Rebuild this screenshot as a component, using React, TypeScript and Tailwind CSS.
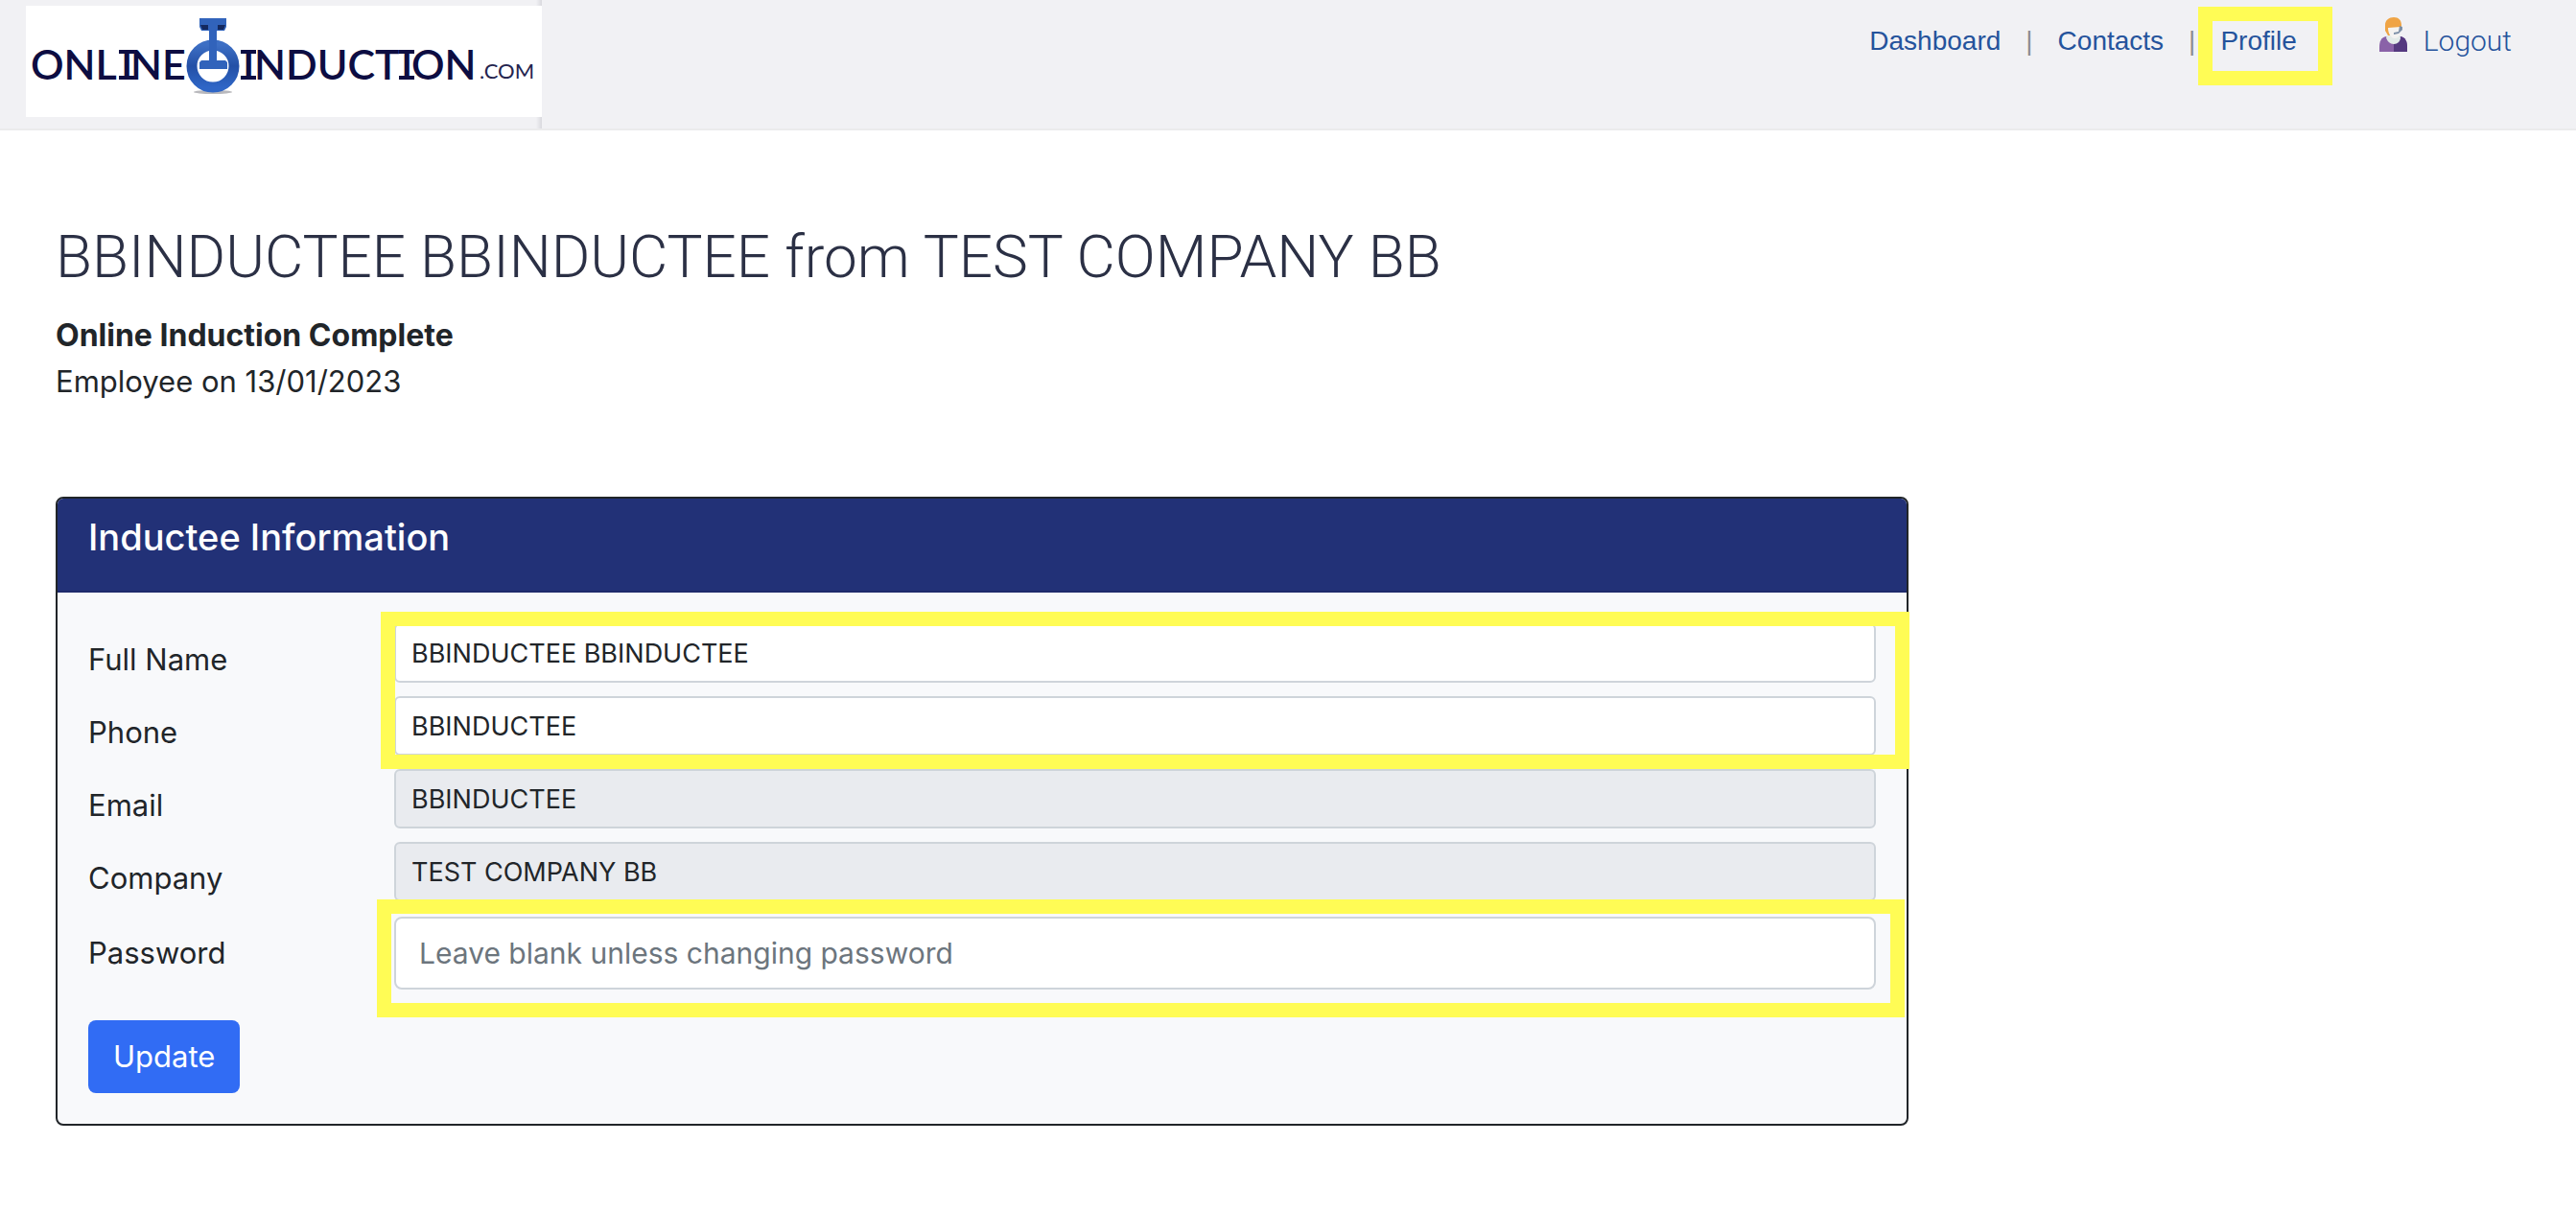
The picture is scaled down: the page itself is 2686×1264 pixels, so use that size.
import { ReactNode } from "react";

const navLinks = ["Dashboard", "Contacts"];

const Highlight = ({ className }: { className: string }) => (
  <div
    aria-hidden="true"
    className={`pointer-events-none absolute border-[15px] border-[#fffc55] ${className}`}
  />
);

const Logo = () => (
  <svg viewBox="0 0 538 116" className="block h-[116px] w-[538px] bg-white" role="img" aria-label="Online Induction">
    <defs>
      <linearGradient id="ring" x1="0" y1="0" x2="0" y2="1">
        <stop offset="0" stopColor="#3d6fc4" />
        <stop offset="0.5" stopColor="#2450a6" />
        <stop offset="1" stopColor="#2f66c6" />
      </linearGradient>
    </defs>
    <g fill="#0d0d42" fontFamily="Lato, sans-serif" fontSize="43" fontWeight="600">
      <text x="5" y="77">ONL</text>
      <text x="99" y="77">I</text>
      <text x="109" y="77">NE</text>
      <text x="226" y="77">I</text>
      <text x="238" y="77">NDUCT</text>
      <text x="391" y="77">I</text>
      <text x="402" y="77">ON</text>
      <text x="473" y="76" fontSize="22" fontWeight="400" fill="#24244f">.COM</text>
    </g>
    {/* serifs of the three I's */}
    <path d="M97 46h16v4H97zM97 73h16v4H97zM224 46h16v4h-16zM224 73h16v4h-16zM389 46h16v4h-16zM389 73h16v4h-16z" fill="#0d0d42" />
    <ellipse cx="195" cy="90" rx="20" ry="2" fill="#b9b9bd" />
    <circle cx="195" cy="63" r="22" fill="none" stroke="url(#ring)" strokeWidth="11" />
    <path d="M181 13h28v9l-2 4h-8v31h9l2 2v7h-29v-7l2-2h8V26h-8l-2-4z" fill="#3163bb" />
    <path d="M182 20h8v5h-6zM200 20h8l-2 5h-6z" fill="#14295f" />
  </svg>
);

const UserIcon = () => (
  <svg viewBox="0 0 29 36" className="h-9 w-[29px]" aria-hidden="true">
    <path d="M0 36v-5c0-6 2-10 7-11h15c5 1 7 5 7 11v5z" fill="#8a62a8" />
    <path d="M15 36V27l7-7c5 1 7 5 7 11v5z" fill="#55397f" />
    <path d="M8 19h13l1 2c0 4-3 7-7 7s-7-3-8-7z" fill="#e3ebe9" />
    <path d="M6 8c0-5 4-8 9-8s8 3 8 8v4H10l2 7h-3l-3-5z" fill="#efa445" />
    <path d="M9 11l13-1c1 6-1 12-6 12-4 0-7-5-7-11z" fill="#f4f3f1" />
    <path d="M21 9l3 1v3l-4 4-5 1v-2l5-1z" fill="#7d90a8" />
  </svg>
);

const Header = () => (
  <header className="flex justify-between border-b-2 border-[#ebebec] bg-[#f1f1f4] pl-[27px] pr-[67px]">
    <a href="#" className="block bg-[linear-gradient(to_left,#d9d9de,#f1f1f4_6px)] pt-[6px] pb-3">
      <Logo />
    </a>
    <nav className="flex items-start pt-[22px] font-['Liberation_Sans',sans-serif] text-[28px] leading-[42px] text-[#25539c]">
      <div className="flex gap-[26px]">
        {navLinks.map((link) => (
          <div key={link} className="flex gap-[26px]">
            <a href="#">{link}</a>
            <span className="text-[#8c8c91]">|</span>
          </div>
        ))}
        <div className="relative">
          <a href="#">Profile</a>
          <Highlight className="-top-[15px] -left-[23px] h-[82px] w-[140px]" />
        </div>
      </div>
      <a href="#" className="ml-[86px] flex gap-[17px] font-[Roboto,sans-serif] text-[30px] font-light">
        <span className="-mt-1">
          <UserIcon />
        </span>
        <span>Logout</span>
      </a>
    </nav>
  </header>
);

type FieldProps = {
  id: string;
  label: string;
  value: string;
  disabled?: boolean;
};

const Field = ({ id, label, value, disabled }: FieldProps) => (
  <div className="grid h-[62px] grid-cols-[319px_1fr] items-start">
    <label htmlFor={id} className="pt-[14px] leading-[48px]">
      {label}
    </label>
    <input
      id={id}
      type="text"
      defaultValue={value}
      disabled={disabled}
      className="h-[62px] w-full rounded-md border-2 border-[#ced4da] bg-white px-4 text-[27px] disabled:bg-[#e9ebef]"
    />
  </div>
);

const FieldGroup = ({ children }: { children: ReactNode }) => (
  <div className="relative flex flex-col gap-[14px]">{children}</div>
);

const App = () => {
  return (
    <div className="min-h-screen bg-white font-[Inter,sans-serif] text-[31px] leading-[48px] text-[#212529]">
      <Header />
      <main className="pt-[94px] pl-[58px] pr-[52px]">
        <h1 className="mb-5 font-[Roboto,sans-serif] text-[62px] leading-[76px] font-light text-[#2b3045]">
          BBINDUCTEE BBINDUCTEE from TEST COMPANY BB
        </h1>
        <p className="text-[32px] font-bold">Online Induction Complete</p>
        <p>Employee on 13/01/2023</p>

        <section className="mt-24 w-3/4 rounded-lg border-2 border-[#212529] bg-[#f8f9fb]">
          <div className="rounded-t-md border-b-2 border-[#1e2a6b] bg-[#223177] px-8 pt-4 pb-8">
            <h2 className="text-[38px] font-medium text-white">Inductee Information</h2>
          </div>
          <form className="p-8" onSubmit={(e) => e.preventDefault()}>
            <div className="flex flex-col gap-[14px]">
              <FieldGroup>
                <Field id="name" label="Full Name" value="BBINDUCTEE BBINDUCTEE" />
                <Field id="phone" label="Phone" value="BBINDUCTEE" />
                <Highlight className="-top-3 -right-[35px] -bottom-[14px] left-[305px]" />
              </FieldGroup>
              <FieldGroup>
                <Field id="email" label="Email" value="BBINDUCTEE" disabled />
                <Field id="company" label="Company" value="TEST COMPANY BB" disabled />
              </FieldGroup>
            </div>
            <div className="relative mt-4 grid grid-cols-[319px_1fr] items-center">
              <label htmlFor="password">Password</label>
              <input
                id="password"
                type="password"
                placeholder="Leave blank unless changing password"
                className="h-[76px] w-full rounded-lg border-2 border-[#ced4da] bg-white px-6 text-[30px] placeholder:text-[#6c757d]"
              />
              <Highlight className="-top-[18px] -right-[30px] -bottom-[29px] left-[301px]" />
            </div>
            <button type="submit" className="mt-8 block h-[76px] rounded-lg bg-[#316cf4] px-[26px] text-white">
              Update
            </button>
          </form>
        </section>
      </main>
    </div>
  );
};

export default App;
